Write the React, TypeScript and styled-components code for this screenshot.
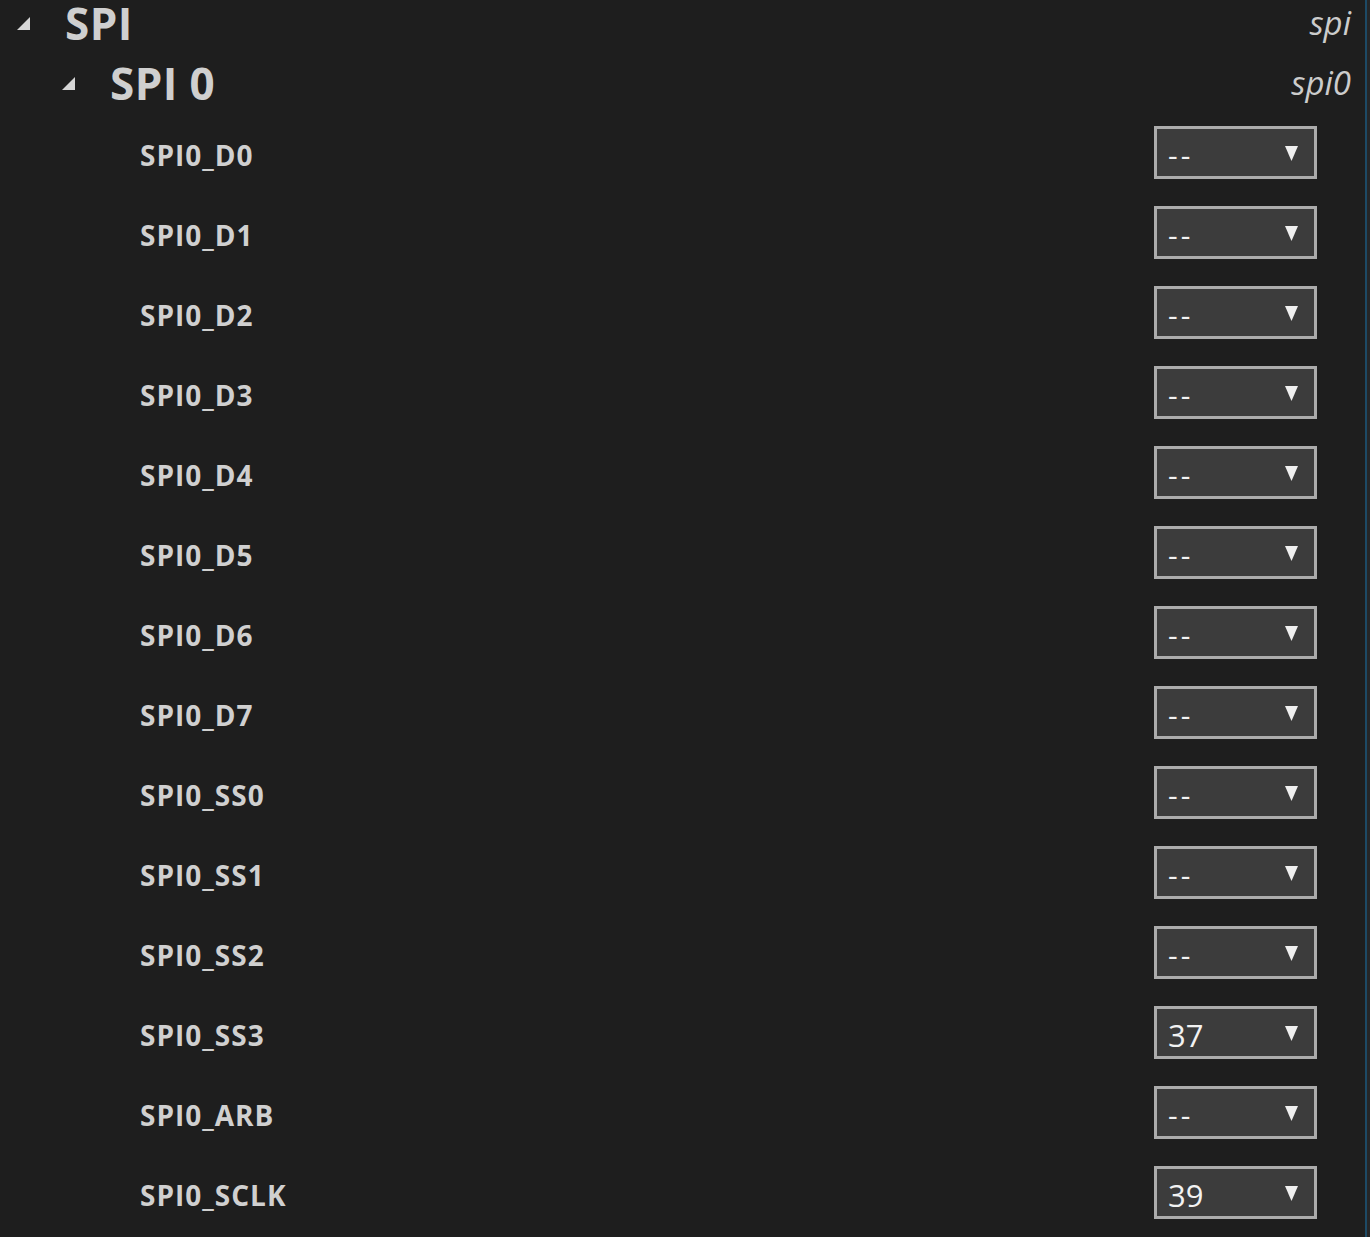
import React from 'react';
import styled, { createGlobalStyle } from 'styled-components';

const GlobalStyle = createGlobalStyle`
  html, body {
    margin: 0;
    padding: 0;
    background: #1e1e1e;
    overflow: hidden;
  }
  body {
    font-family: 'Open Sans', 'Noto Sans', sans-serif;
    color: #cccccc;
  }
`;

const Frame = styled.div`
  display: flex;
  width: 1370px;
  height: 1237px;
  overflow: hidden;
`;

const Tree = styled.div`
  flex: 1;
`;

const Edge = styled.div`
  width: 5px;
  display: flex;
  &::before {
    content: '';
    width: 2px;
    background: #1d4a66;
  }
  &::after {
    content: '';
    flex: 1;
    background: #262627;
  }
`;

// the top row is partly scrolled out of view
const GroupRow = styled.div<{ $level: number; $top?: boolean }>`
  box-sizing: border-box;
  display: flex;
  align-items: center;
  height: ${(p) => (p.$top ? 53 : 60)}px;
  padding-bottom: ${(p) => (p.$top ? 7 : 0)}px;
  padding-left: ${(p) => 17 + p.$level * 45}px;
  padding-right: 14px;
`;

const Twisty = styled.svg`
  width: 13px;
  height: 13px;
  flex: none;
  margin-right: 35px;
`;

const GroupTitle = styled.div`
  flex: 1;
  font-size: 44px;
  line-height: 46px;
  font-weight: 700;
  color: #cfcfcf;
  letter-spacing: 0.4px;
`;

const GroupId = styled.div`
  font-size: 33px;
  line-height: 40px;
  font-style: italic;
  color: #cccccc;
`;

const ItemRow = styled.div`
  box-sizing: border-box;
  display: flex;
  align-items: center;
  height: 80px;
  padding: 0 48px 1px 140px;
`;

const PinLabel = styled.div`
  flex: 1;
  font-size: 28px;
  font-weight: 700;
  letter-spacing: 1px;
  color: #d0d0d0;
  padding-top: 5px;
`;

const SelectBox = styled.div`
  box-sizing: border-box;
  width: 163px;
  height: 53px;
  border: 3px solid #acacac;
  background: #3c3c3c;
  display: flex;
  align-items: center;
  padding: 0 16px 0 11px;
`;

const SelectValue = styled.span<{ $empty: boolean }>`
  flex: 1;
  font-family: 'Open Sans', 'Noto Sans', sans-serif;
  font-size: ${(p) => (p.$empty ? 30 : 31)}px;
  color: #f2f2f2;
  padding-top: 4px;
  letter-spacing: ${(p) => (p.$empty ? 3 : 0)}px;
`;

const Arrow = styled.svg`
  width: 13px;
  height: 16px;
  flex: none;
`;

const ExpandedIcon = () => (
  <Twisty viewBox="0 0 13 13">
    <polygon points="13,0 13,13 0,13" fill="#d6d6d6" />
  </Twisty>
);

const Dropdown: React.FC<{ value: string }> = ({ value }) => (
  <SelectBox>
    <SelectValue $empty={value === '--'}>{value}</SelectValue>
    <Arrow viewBox="0 0 13 16">
      <polygon points="0,1 13,1 6.5,16" fill="#f0f0f0" />
    </Arrow>
  </SelectBox>
);

const pins: { name: string; value: string }[] = [
  { name: 'SPI0_D0', value: '--' },
  { name: 'SPI0_D1', value: '--' },
  { name: 'SPI0_D2', value: '--' },
  { name: 'SPI0_D3', value: '--' },
  { name: 'SPI0_D4', value: '--' },
  { name: 'SPI0_D5', value: '--' },
  { name: 'SPI0_D6', value: '--' },
  { name: 'SPI0_D7', value: '--' },
  { name: 'SPI0_SS0', value: '--' },
  { name: 'SPI0_SS1', value: '--' },
  { name: 'SPI0_SS2', value: '--' },
  { name: 'SPI0_SS3', value: '37' },
  { name: 'SPI0_ARB', value: '--' },
  { name: 'SPI0_SCLK', value: '39' },
];

const App: React.FC = () => {
  return (
    <>
      <GlobalStyle />
      <Frame>
        <Tree>
          <GroupRow $level={0} $top>
            <ExpandedIcon />
            <GroupTitle>SPI</GroupTitle>
            <GroupId>spi</GroupId>
          </GroupRow>
          <GroupRow $level={1}>
            <ExpandedIcon />
            <GroupTitle>SPI 0</GroupTitle>
            <GroupId>spi0</GroupId>
          </GroupRow>
          {pins.map((pin) => (
            <ItemRow key={pin.name}>
              <PinLabel>{pin.name}</PinLabel>
              <Dropdown value={pin.value} />
            </ItemRow>
          ))}
        </Tree>
        <Edge />
      </Frame>
    </>
  );
};

export default App;
